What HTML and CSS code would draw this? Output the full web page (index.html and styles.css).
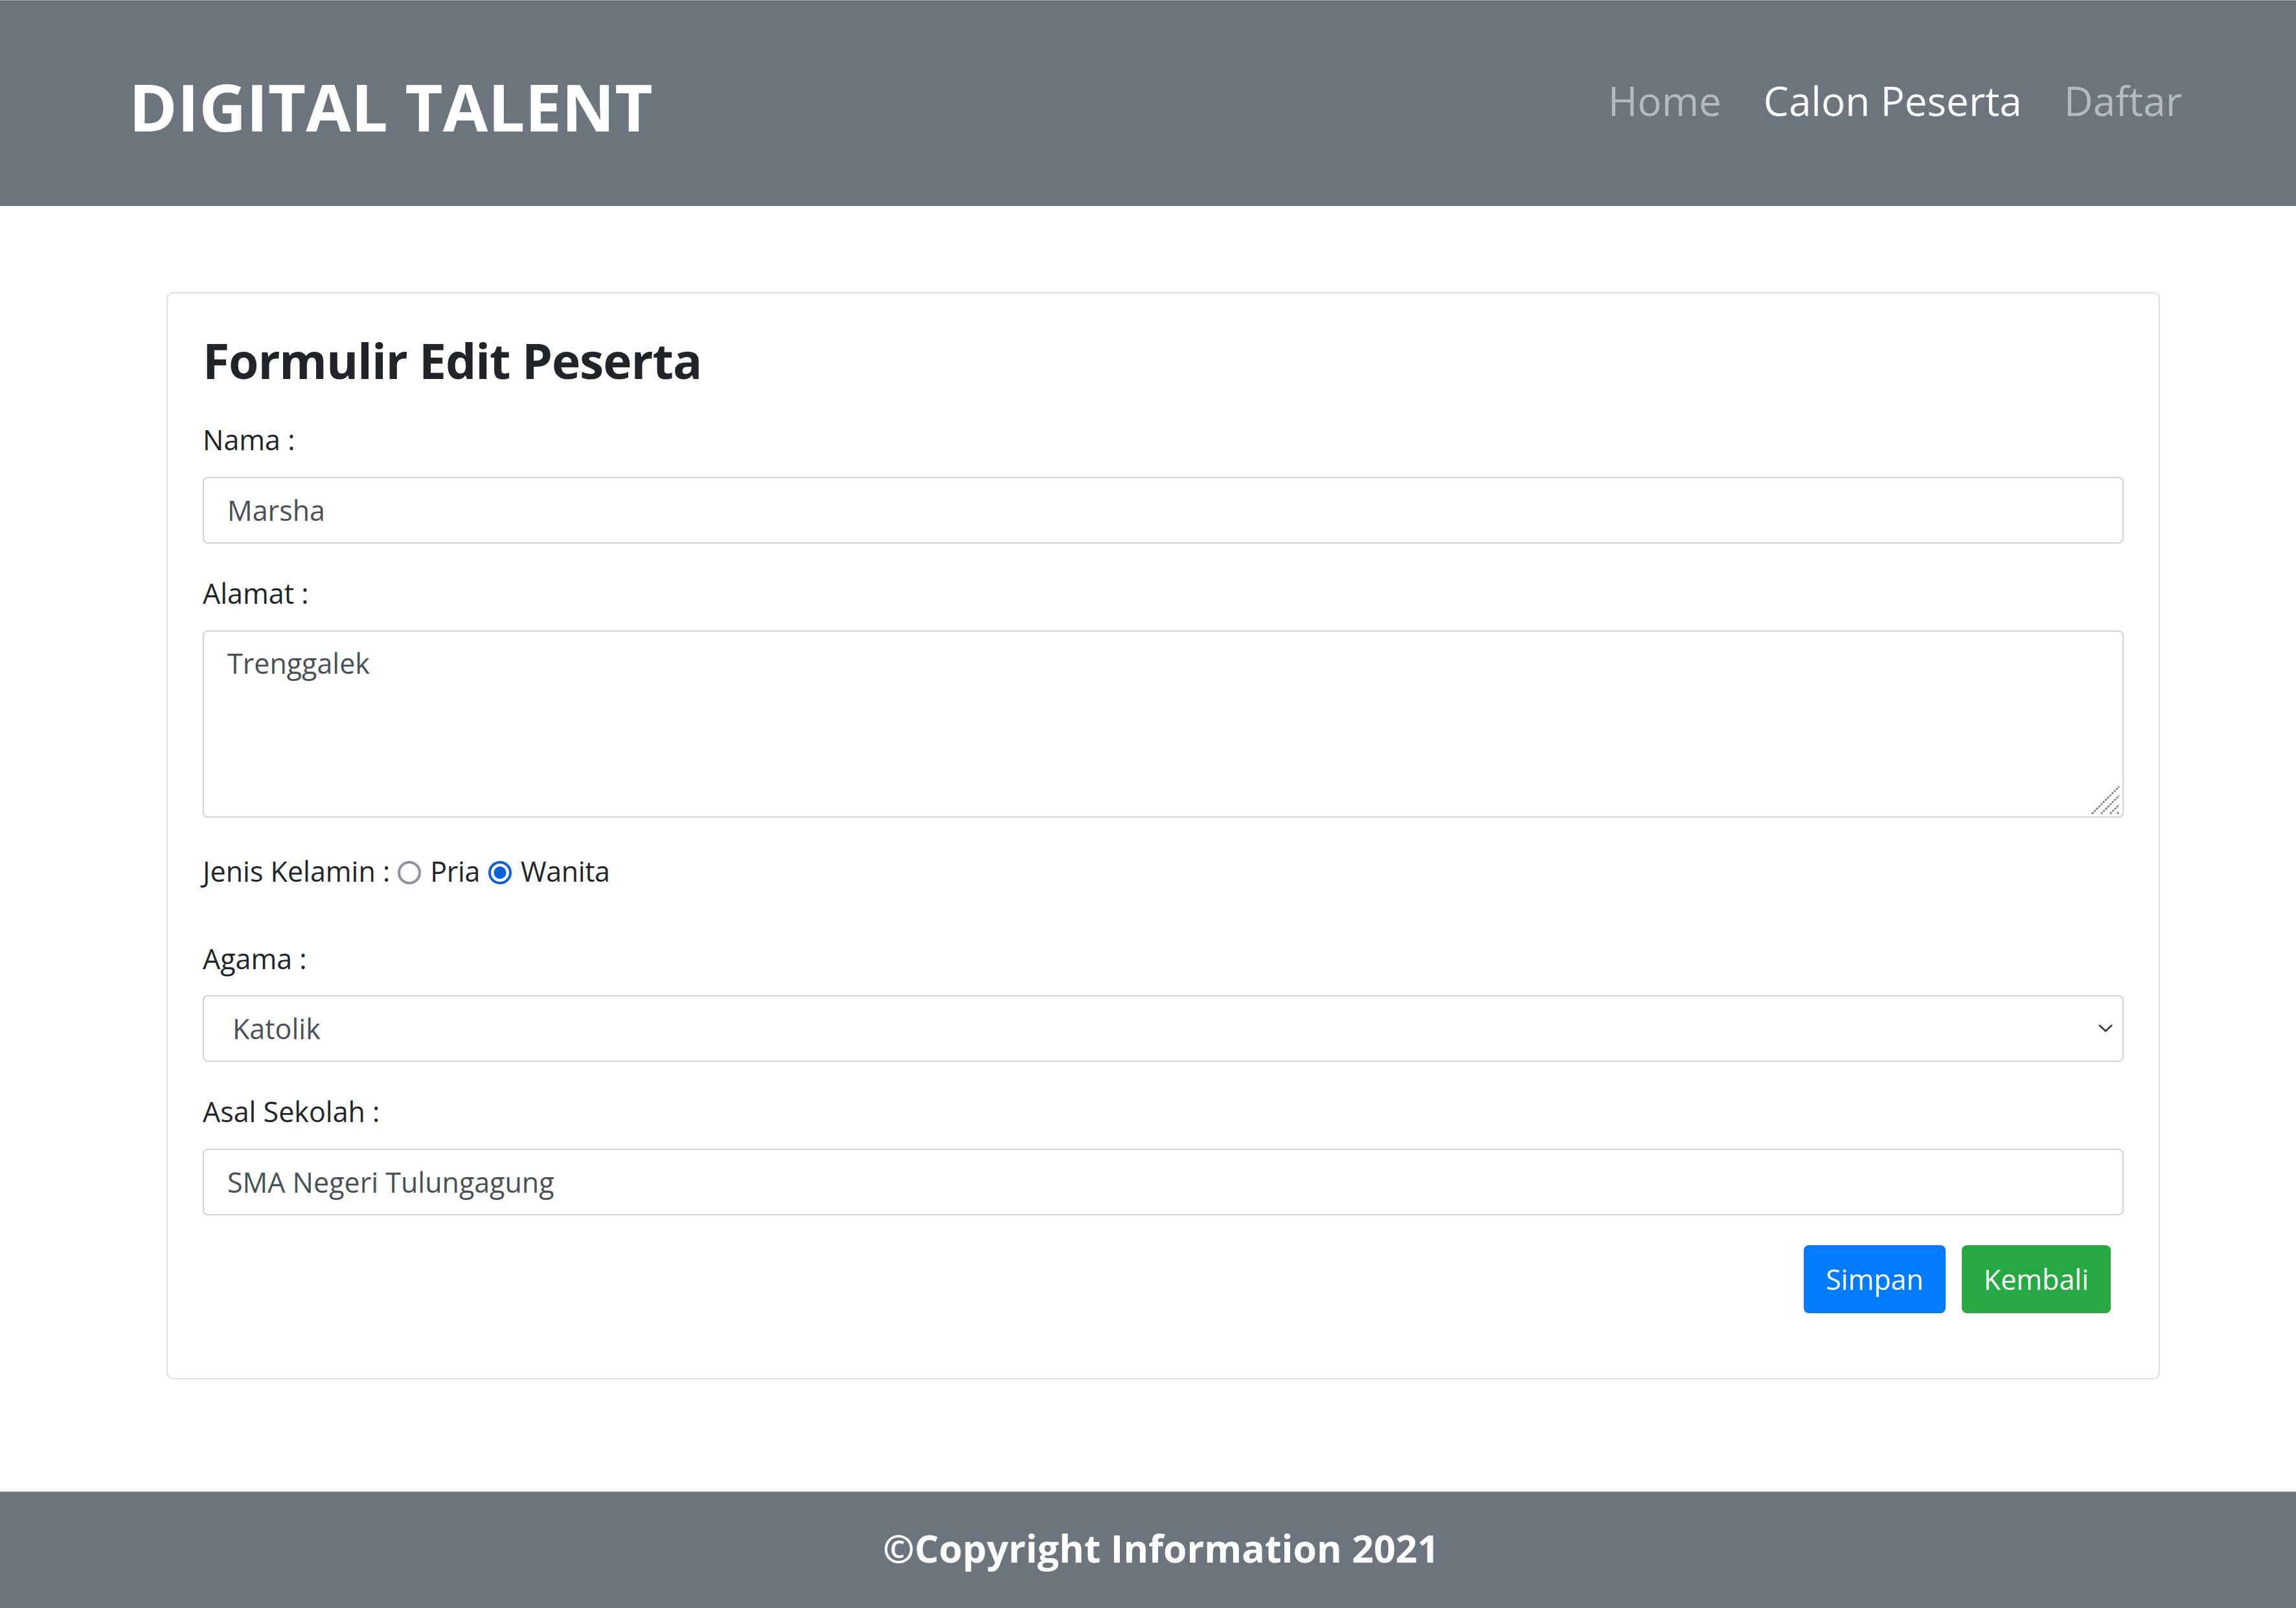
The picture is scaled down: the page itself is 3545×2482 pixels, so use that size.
FILE: index.html
```html
<!DOCTYPE html>
<html lang="id">
<head>
<meta charset="utf-8">
<title>Formulir Edit Peserta</title>
<link rel="stylesheet" href="styles.css">
</head>
<body>
<header class="navbar">
  <div class="brand">DIGITAL TALENT</div>
  <nav class="nav">
    <a class="nav-link" href="#">Home</a>
    <a class="nav-link active" href="#">Calon Peserta</a>
    <a class="nav-link" href="#">Daftar</a>
  </nav>
</header>
<main class="page">
  <section class="card">
    <h3 class="card-title">Formulir Edit Peserta</h3>
    <form class="form">
      <div class="form-group">
        <label class="label">Nama :</label>
        <input class="form-control" type="text" value="Marsha">
      </div>
      <div class="form-group">
        <label class="label">Alamat :</label>
        <div class="textarea-wrap">
          <textarea class="form-control textarea">Trenggalek</textarea>
          <svg class="grip" viewBox="0 0 44 44" width="44" height="44" aria-hidden="true">
            <path d="M1 43 L43 1 M15 43 L43 15 M29 43 L43 29 M40 43 L43 40" fill="none" stroke="#7a7a7a" stroke-width="2.6" stroke-dasharray="3.2 1.6"/>
          </svg>
        </div>
      </div>
      <div class="radio-row">
        <span class="radio-title">Jenis Kelamin :</span>
        <input class="radio" type="radio" name="jk" value="pria">
        <span class="radio-text">Pria</span>
        <input class="radio" type="radio" name="jk" value="wanita" checked>
        <span class="radio-text">Wanita</span>
      </div>
      <div class="form-group">
        <label class="label label-tight">Agama :</label>
        <div class="select-wrap">
          <select class="form-control select">
            <option>Islam</option>
            <option selected>Katolik</option>
            <option>Kristen</option>
            <option>Hindu</option>
            <option>Budha</option>
          </select>
          <svg class="chevron" viewBox="0 0 22 13" width="22" height="13" aria-hidden="true"><path d="M2 2 L11 10.5 L20 2" fill="none" stroke="#3d4247" stroke-width="3" stroke-linecap="round" stroke-linejoin="round"/></svg>
        </div>
      </div>
      <div class="form-group">
        <label class="label">Asal Sekolah :</label>
        <input class="form-control" type="text" value="SMA Negeri Tulungagung">
      </div>
      <div class="actions">
        <button class="btn btn-primary" type="button">Simpan</button>
        <button class="btn btn-success" type="button">Kembali</button>
      </div>
    </form>
  </section>
</main>
<footer class="footer">©Copyright Information 2021</footer>
</body>
</html>
```
FILE: styles.css
```css
* { box-sizing: border-box; }
html, body { margin: 0; padding: 0; }
body {
  font-family: "Open Sans", "Noto Sans", "Liberation Sans", sans-serif;
  font-size: 43px;
  line-height: 66px;
  color: #212529;
  background: #ffffff;
  width: 3545px;
}
.navbar {
  height: 318px;
  border-top: 1px solid #a3a8ad;
  background: #6c757d;
  display: flex;
  justify-content: space-between;
  align-items: flex-start;
  padding: 0 176px 0 199px;
}
.brand {
  margin-top: 103px;
  font-size: 101px;
  line-height: 121px;
  font-weight: 700;
  color: #ffffff;
}
.nav { display: flex; gap: 65px; margin-top: 108px; }
.nav-link {
  font-size: 62px;
  line-height: 92px;
  color: rgba(255,255,255,.5);
  text-decoration: none;
}
.nav-link.active { color: #ffffff; }
.page { padding: 133px 210px 173px 257px; }
.card {
  border: 2px solid #dfdfdf;
  border-radius: 10px;
  padding: 54px;
  background: #fff;
}
.card-title {
  margin: 4px 0 45px 0;
  font-size: 75px;
  line-height: 90px;
  font-weight: 700;
  letter-spacing: -1.1px;
  color: #212529;
}
.form { margin: 0; }
.form-group { margin-bottom: 44px; }
.label { display: block; margin-bottom: 24px; line-height: 66px; }
.label-tight { margin-bottom: 23px; }
.form-control {
  display: block;
  width: 100%;
  height: 103px;
  padding: 0 36px;
  font-family: inherit;
  font-size: 43px;
  color: #495057;
  background: #fff;
  border: 2px solid #ced4da;
  border-radius: 8px;
  outline: none;
}
.textarea-wrap { position: relative; }
.textarea {
  height: 289px;
  padding: 16px 36px;
  line-height: 66px;
  resize: none;
}
.grip {
  position: absolute;
  right: 6px;
  bottom: 5px;
  pointer-events: none;
}
.radio-row {
  display: flex;
  align-items: center;
  height: 66px;
  margin-top: 50px;
  margin-bottom: 69px;
}
.radio {
  appearance: none;
  -webkit-appearance: none;
  width: 36px;
  height: 36px;
  margin: 3px 0 0 0;
  border-radius: 50%;
  border: 4px solid #8f8f9d;
  background: #fff;
  flex: none;
}
.radio:checked {
  border-color: #0a5fdb;
  background: radial-gradient(circle, #0a5fdb 0 9px, #ffffff 10px);
}
.radio-title { margin-right: 12px; }
.radio-text { margin: 0 13px 0 14px; letter-spacing: -0.4px; }
.select-wrap { position: relative; }
.select {
  appearance: none;
  -webkit-appearance: none;
  padding-left: 44px;
}
.chevron {
  position: absolute;
  right: 17px;
  top: 45px;
  pointer-events: none;
}
.actions {
  display: flex;
  justify-content: flex-end;
  gap: 25px;
  padding-top: 2px;
  padding-right: 20px;
  margin-bottom: 46px;
}
.btn {
  font-family: inherit;
  font-size: 43px;
  line-height: 66px;
  height: 105px;
  padding: 0 34px;
  border: 0;
  border-radius: 8px;
  color: #fff;
}
.btn-primary { background: #007bff; }
.btn-success { background: #28a745; }
.footer {
  height: 180px;
  background: #6c757d;
  border-top: 1px solid #a3a8ad;
  color: #fff;
  font-weight: 700;
  font-size: 59px;
  line-height: 90px;
  text-align: center;
  padding: 41px 0 0 40px;
}
```
